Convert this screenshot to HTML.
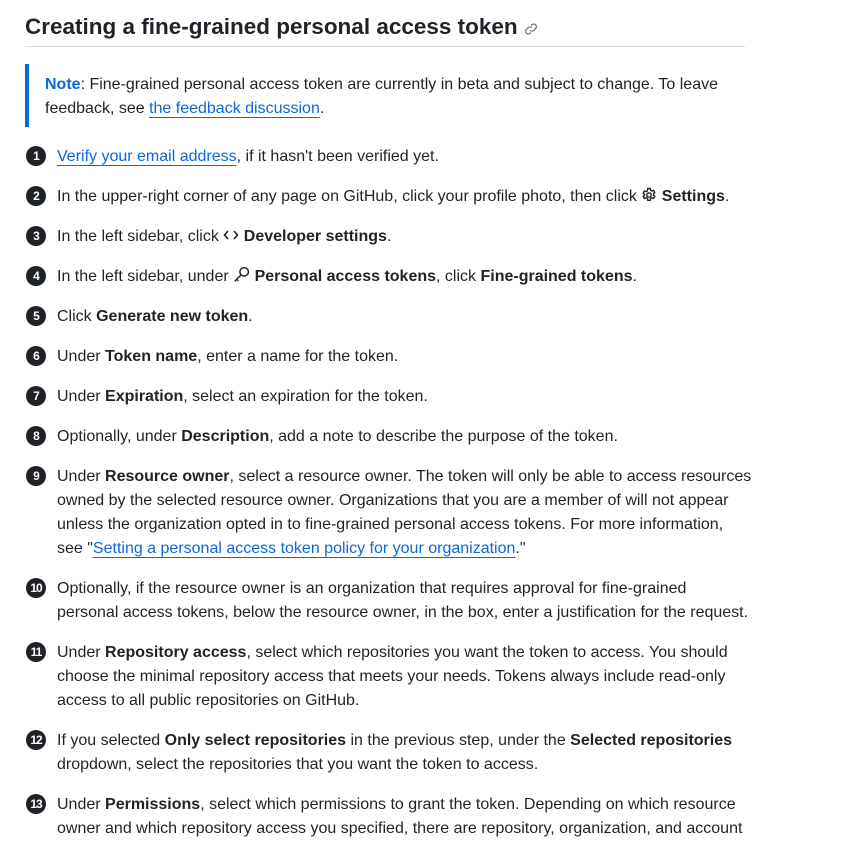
<!DOCTYPE html>
<html><head><meta charset="utf-8"><style>
body{margin:0;background:#fff;width:851px;height:826px;overflow:hidden;position:relative;font-family:"Liberation Sans",sans-serif;color:#1f2328;font-size:16px}
h1{position:absolute;left:25px;top:10px;margin:0;font-size:22.5px;font-weight:bold;line-height:34px;white-space:nowrap}
.hr{position:absolute;left:25px;top:46px;width:720px;height:1px;background:#d8dee4}
.note{position:absolute;left:25px;top:64px;width:4px;height:63px;background:#0969da}
.nt{position:absolute;left:45px;top:73px;line-height:24px;white-space:nowrap}
a{color:#0969da;text-decoration:underline;text-underline-offset:4px}
.it{position:absolute;left:57px;line-height:24px;white-space:nowrap;margin-top:1px}
.b{position:absolute;left:26px;width:20px;height:20px;border-radius:50%;background:#1f2328;color:#fff;font-weight:bold;font-size:12px;line-height:20px;text-align:center;letter-spacing:-1px}
b{font-weight:bold}
svg{vertical-align:-2px}
</style></head><body>
<h1>Creating a fine-grained personal access token <svg width="14" height="14" viewBox="0 0 16 16" fill="none" stroke="#656d76" stroke-width="1.4"><path d="M7 9.5a3 3 0 0 0 4.2 0l2.3-2.3a3 3 0 0 0-4.2-4.2L8.2 4"/><path d="M9 6.5a3 3 0 0 0-4.2 0L2.5 8.8a3 3 0 0 0 4.2 4.2L7.8 12"/></svg></h1>
<div class="hr"></div>
<div class="note"></div>
<div class="nt"><b style="color:#0969da">Note</b>: Fine-grained personal access token are currently in beta and subject to change. To leave<br>feedback, see <a>the feedback discussion</a>.</div>

<div class="b" style="top:146px">1</div><div class="it" style="top:144px"><a>Verify your email address</a>, if it hasn't been verified yet.</div>
<div class="b" style="top:186px">2</div><div class="it" style="top:184px">In the upper-right corner of any page on GitHub, click your profile photo, then click <svg width="16" height="16" viewBox="0 0 16 16" fill="none" stroke="#1f2328" stroke-width="1.4"><circle cx="8" cy="8" r="2.2"/><path d="M6.8 1.5h2.4l.4 1.8 1.3.7 1.7-.6 1.2 2-1.3 1.3v1.4l1.3 1.3-1.2 2-1.7-.6-1.3.7-.4 1.8H6.8l-.4-1.8-1.3-.7-1.7.6-1.2-2 1.3-1.3V7.3L2.2 6l1.2-2 1.7.6 1.3-.7z"/></svg> <b>Settings</b>.</div>
<div class="b" style="top:226px">3</div><div class="it" style="top:224px">In the left sidebar, click <svg width="16" height="16" viewBox="0 0 16 16" fill="none" stroke="#1f2328" stroke-width="1.6"><path d="M5 4 1.5 8 5 12M11 4l3.5 4-3.5 4"/></svg> <b>Developer settings</b>.</div>
<div class="b" style="top:266px">4</div><div class="it" style="top:264px">In the left sidebar, under <svg width="17" height="17" viewBox="0 0 16 16" fill="none" stroke="#1f2328" stroke-width="1.4"><circle cx="10.5" cy="5.5" r="4"/><path d="M7.5 8.5 1.5 14.5M3.5 12.5l1.5 1.5"/></svg> <b>Personal access tokens</b>, click <b>Fine-grained tokens</b>.</div>
<div class="b" style="top:306px">5</div><div class="it" style="top:304px">Click <b>Generate new token</b>.</div>
<div class="b" style="top:346px">6</div><div class="it" style="top:344px">Under <b>Token name</b>, enter a name for the token.</div>
<div class="b" style="top:386px">7</div><div class="it" style="top:384px">Under <b>Expiration</b>, select an expiration for the token.</div>
<div class="b" style="top:426px">8</div><div class="it" style="top:424px">Optionally, under <b>Description</b>, add a note to describe the purpose of the token.</div>
<div class="b" style="top:466px">9</div><div class="it" style="top:464px">Under <b>Resource owner</b>, select a resource owner. The token will only be able to access resources<br>owned by the selected resource owner. Organizations that you are a member of will not appear<br>unless the organization opted in to fine-grained personal access tokens. For more information,<br>see "<a>Setting a personal access token policy for your organization</a>."</div>
<div class="b" style="top:578px">10</div><div class="it" style="top:576px">Optionally, if the resource owner is an organization that requires approval for fine-grained<br>personal access tokens, below the resource owner, in the box, enter a justification for the request.</div>
<div class="b" style="top:642px">11</div><div class="it" style="top:640px">Under <b>Repository access</b>, select which repositories you want the token to access. You should<br>choose the minimal repository access that meets your needs. Tokens always include read-only<br>access to all public repositories on GitHub.</div>
<div class="b" style="top:730px">12</div><div class="it" style="top:728px">If you selected <b>Only select repositories</b> in the previous step, under the <b>Selected repositories</b><br>dropdown, select the repositories that you want the token to access.</div>
<div class="b" style="top:794px">13</div><div class="it" style="top:792px">Under <b>Permissions</b>, select which permissions to grant the token. Depending on which resource<br>owner and which repository access you specified, there are repository, organization, and account</div>
</body></html>
